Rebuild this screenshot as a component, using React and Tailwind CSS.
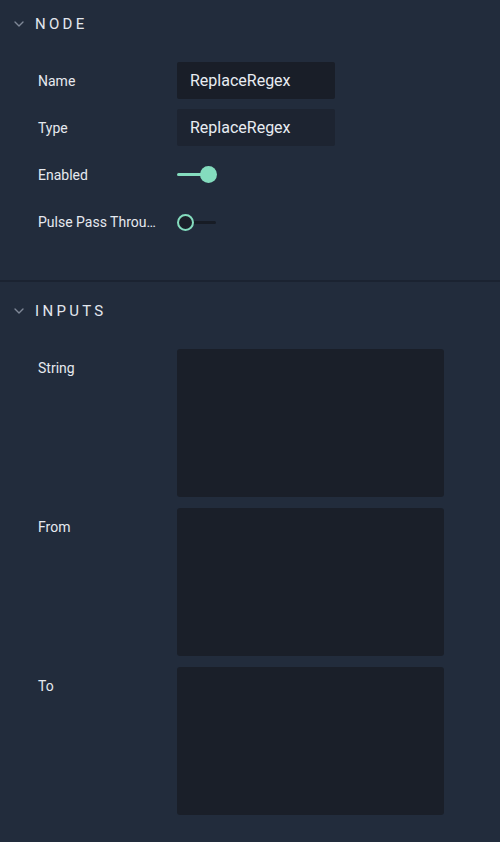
import { ChevronDown } from 'lucide-react';

const font = { fontFamily: 'Roboto, "Noto Sans", sans-serif' };

const SectionHeader = ({ title }) => (
    <div className="flex items-center h-12 pl-[11px] gap-[8px]">
        <ChevronDown size={16} strokeWidth={2} className="text-[#7f8898]" />
        <span className="text-[15px] tracking-[0.22em] text-[#e3e7ee]">{title}</span>
    </div>
);

const Row = ({ label, children, top }) => (
    <div className={top ? "flex items-start" : "flex items-center"}>
        <div className="w-[177px] pl-[38px] pr-[14px] h-[37px] pt-px flex items-center shrink-0">
            <span className="text-[14px] text-[#e6e9ef] whitespace-nowrap">{label}</span>
        </div>
        {children}
    </div>
);

const TextInput = ({ value, muted }) => (
    <div className={
        "w-[158px] h-[37px] flex items-center pl-[13px] rounded-[2px] text-[16px] text-[#e8ecf2] " +
        (muted ? "bg-[#1d2431]" : "bg-[#191e28]")
    }>
        {value}
    </div>
);

const Toggle = ({ on }) => (
    <div className="relative w-[42px] h-[37px]">
        {on ? (
            <>
                <div className="absolute left-0 top-[17px] w-[26px] h-[3px] rounded-full bg-[#84dcbe]" />
                <div className="absolute left-[23px] top-[10px] w-[17px] h-[17px] rounded-full bg-[#84dcbe]" />
            </>
        ) : (
            <>
                <div className="absolute left-[10px] top-[18px] w-[29px] h-[3px] rounded-full bg-[#171c25]" />
                <div className="absolute left-0 top-[11px] w-[17px] h-[17px] rounded-full border-2 border-[#84dcbe] bg-[#1b2029]" />
            </>
        )}
    </div>
);

const TextArea = () => (
    <div className="w-[267px] h-[148px] rounded-[3px] bg-[#1a1f29]" />
);

export default function App() {
    return (
        <div className="w-[500px] min-h-[842px] bg-[#222c3c] select-none" style={font}>
            {/* Node section */}
            <section className="pb-[40px]">
                <SectionHeader title="NODE" />
                <div className="flex flex-col gap-[10px] pt-[14px]">
                    <Row label="Name"><TextInput value="ReplaceRegex" /></Row>
                    <Row label="Type"><TextInput value="ReplaceRegex" muted /></Row>
                    <Row label="Enabled"><Toggle on /></Row>
                    <Row label="Pulse Pass Throu…"><Toggle /></Row>
                </div>
            </section>

            <div className="h-[2px] bg-[#1b2331]" />

            {/* Inputs section */}
            <section className="pt-[5px] pb-[28px]">
                <SectionHeader title="INPUTS" />
                <div className="flex flex-col gap-[11px] pt-[14px]">
                    <Row label="String" top><TextArea /></Row>
                    <Row label="From" top><TextArea /></Row>
                    <Row label="To" top><TextArea /></Row>
                </div>
            </section>
        </div>
    );
}
